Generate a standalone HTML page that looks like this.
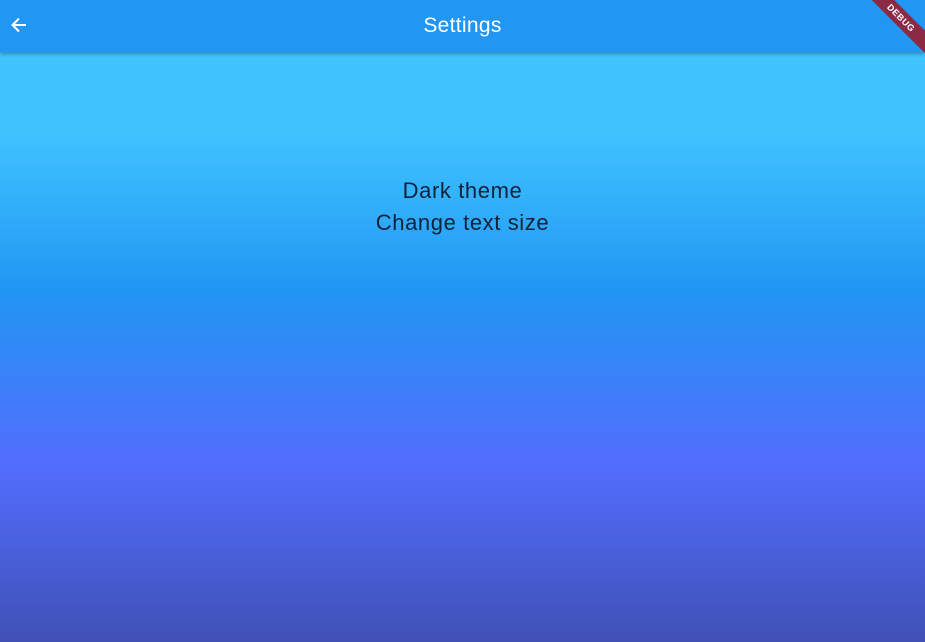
<!DOCTYPE html>
<html><head><style>
html,body{margin:0;width:925px;height:642px;overflow:hidden;font-family:"Liberation Sans",sans-serif}
body{background:linear-gradient(to bottom,#40C4FF 0px,#40C4FF 130px,#2196F3 290px,#536DFE 465px,#3F51B5 642px)}
.bar{position:absolute;top:0;left:0;width:925px;height:52px;background:#2196F3;box-shadow:0 2px 4px rgba(0,0,0,.3)}
.title{position:absolute;top:14px;width:100%;text-align:center;color:#fff;font-size:21px;letter-spacing:.3px}
.txt{position:absolute;width:100%;text-align:center;color:#12213a;font-size:22px;letter-spacing:.6px}
.ribbon{position:absolute;top:10px;right:-28px;width:104px;height:16px;background:#8a2a45;transform:rotate(45deg);color:#fff;font-size:9px;font-weight:bold;text-align:center;line-height:16px;letter-spacing:.5px}
</style></head><body>
<div class="bar">
<svg style="position:absolute;left:9px;top:15px" width="20" height="20" viewBox="0 0 20 20"><path d="M17 10H4M10 3.5L3.5 10 10 16.5" stroke="#fff" stroke-width="2" fill="none"/></svg>
<div class="title">Settings</div>
</div>
<div class="ribbon">DEBUG</div>
<div class="txt" style="top:178px">Dark theme</div>
<div class="txt" style="top:210px">Change text size</div>
</body></html>
